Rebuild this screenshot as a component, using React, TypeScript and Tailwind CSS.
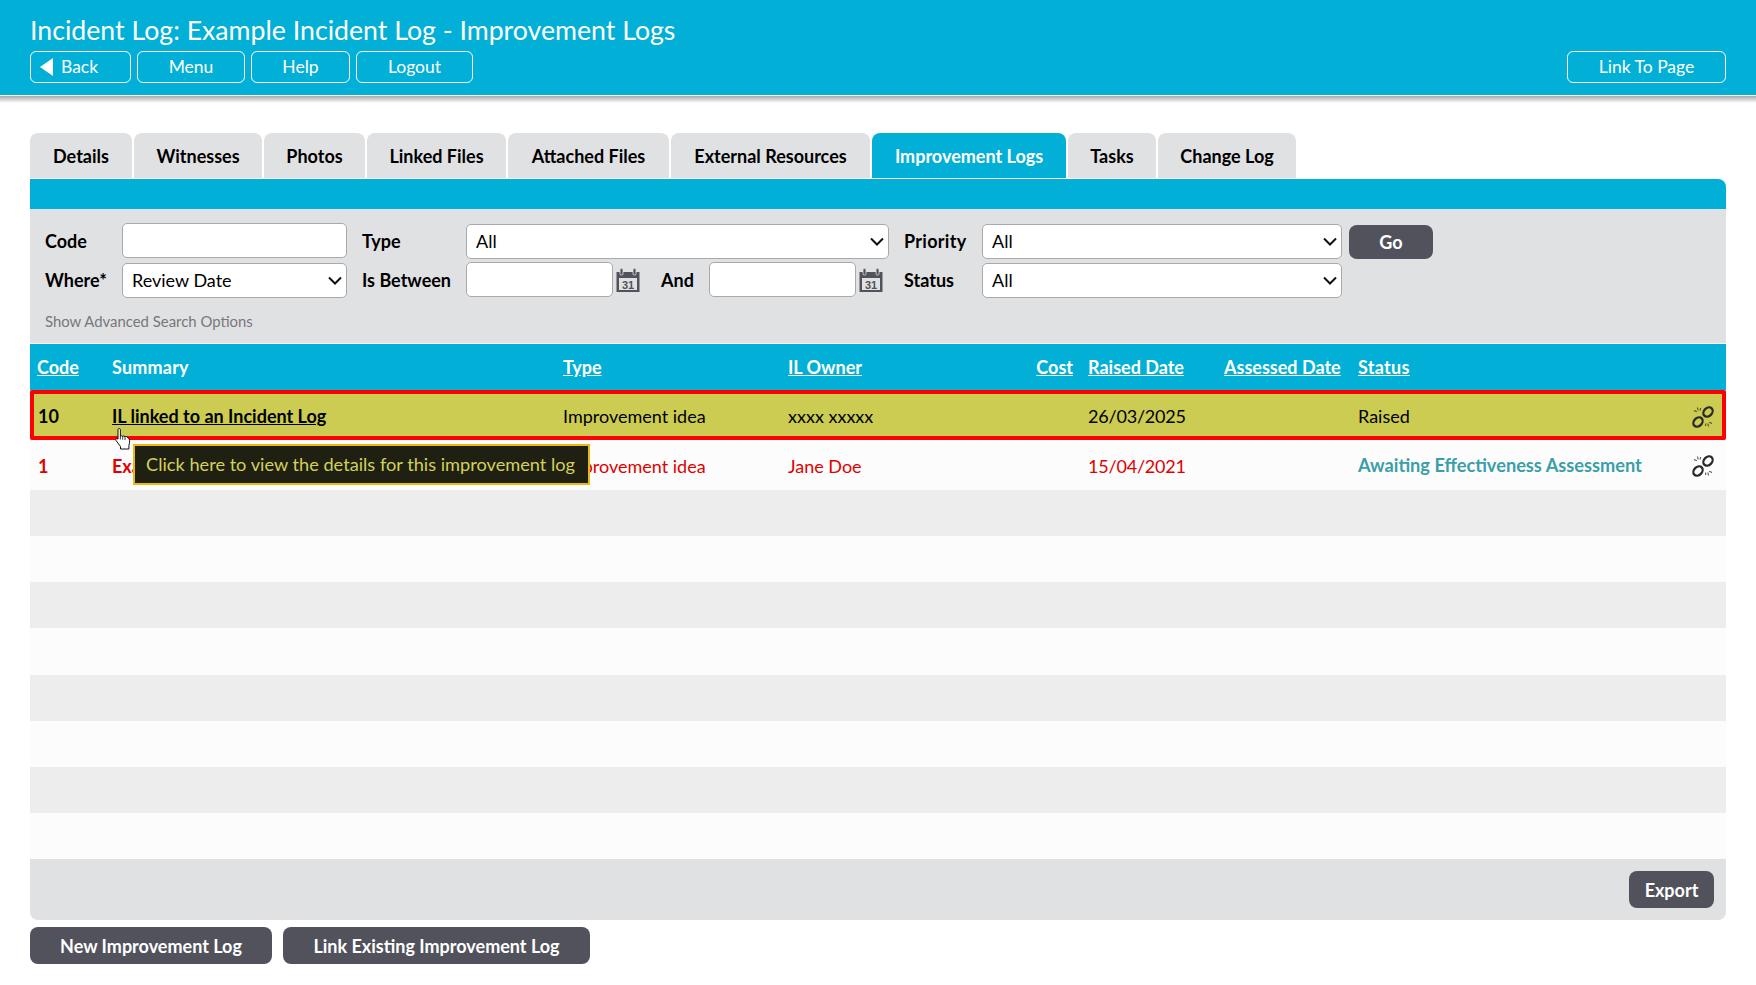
import React from 'react';

const font = { fontFamily: 'Lato, "Open Sans", sans-serif' };

const tabs = [
  { label: 'Details', w: 'w-[102px]' },
  { label: 'Witnesses', w: 'w-[128px]' },
  { label: 'Photos', w: 'w-[101px]' },
  { label: 'Linked Files', w: 'w-[139px]' },
  { label: 'Attached Files', w: 'w-[161px]' },
  { label: 'External Resources', w: 'w-[199px]' },
  { label: 'Improvement Logs', w: 'w-[194px]', active: true },
  { label: 'Tasks', w: 'w-[88px]' },
  { label: 'Change Log', w: 'w-[138px]' },
];

const rowGrid =
  'grid grid-cols-[75px_451px_225px_239px_61px_136px_134px_329px_46px] items-center';

function CalendarIcon() {
  return (
    <svg width="24" height="24" viewBox="0 0 24 24" className="ml-[3px] shrink-0">
      <path d="M0.500 4h23v20h-23z M3 10v12h18V10z" fill="#52525c" fillRule="evenodd" />
      <rect x="4" y="0.500" width="3" height="6.500" rx="1.200" fill="#52525c" stroke="#e0e1e3" strokeWidth="0.800" />
      <rect x="17" y="0.500" width="3" height="6.500" rx="1.200" fill="#52525c" stroke="#e0e1e3" strokeWidth="0.800" />
      <text x="12" y="20.500" textAnchor="middle" fontSize="11" fontWeight="700" fill="#52525c" fontFamily="Liberation Sans, sans-serif">
        31
      </text>
    </svg>
  );
}

function BrokenLinkIcon() {
  return (
    <svg width="24" height="24" viewBox="0 0 24 24" fill="none" stroke="#2a2a2a" className="mx-auto">
      <ellipse cx="17" cy="7" rx="5.200" ry="4" strokeWidth="2.300" transform="rotate(-45 17 7)" />
      <ellipse cx="7" cy="17" rx="5.200" ry="4" strokeWidth="2.300" transform="rotate(-45 7 17)" />
      <path d="M6.500 2.500l.6 3M3 5.500l2.800 1.200M9.500 3l-.3 2.500M17.500 21.500l-.6-3M21 18.500l-2.800-1.200M14.500 21l.3-2.500" strokeWidth="1.100" opacity="0.800" />
    </svg>
  );
}

function HandCursor() {
  return (
    <svg width="18" height="23" viewBox="0 0 18 23" className="absolute left-[114px] top-[428px]">
      <path
        d="M4 1.500c0-1.300 2.400-1.300 2.400 0v7c0-1 2.300-1 2.300.2 0-1 2.300-1 2.300.3 0-.9 2.200-.8 2.300.4l2 1.500c.5 2 .3 4.500-.4 6.500v3.600H6.500v-2.500L2 12.500c-1-1.500.8-2.700 2-1.300V1.500z"
        fill="#fff"
        stroke="#111"
        strokeWidth="1"
        strokeLinejoin="round"
      />
      <path d="M6.400 8.500v3M8.700 8.700v3M11 9v3" stroke="#111" strokeWidth="0.800" fill="none" />
    </svg>
  );
}

function HeaderButton({ children, className }: { children: React.ReactNode; className: string }) {
  return (
    <button className={`flex h-[32px] items-center justify-center rounded-[6px] border border-white text-[17.5px] text-white ${className}`}>
      {children}
    </button>
  );
}

function DarkButton({ children, className }: { children: React.ReactNode; className: string }) {
  return (
    <button className={`flex h-[37px] items-center justify-center rounded-[8px] bg-[#52525c] pt-[2px] text-[18px] font-bold text-white ${className}`}>
      {children}
    </button>
  );
}

function Select({ value }: { value: string }) {
  return (
    <div className="relative self-end">
      <select className="h-[35px] w-full appearance-none rounded-[5px] border border-[#a9a9ab] bg-white pl-[9px] text-[18px] text-black">
        <option>{value}</option>
      </select>
      <svg width="14" height="9" viewBox="0 0 14 9" fill="none" stroke="#111" strokeWidth="2" className="pointer-events-none absolute right-[5px] top-[13px]">
        <path d="M1 1.500l6 6 6-6" />
      </svg>
    </div>
  );
}

const fieldClass = 'h-[35px] w-full self-start rounded-[5px] border border-[#a9a9ab] bg-white';
const labelClass = 'text-[18px] font-bold text-black';

export default function App() {
  return (
    <div className="relative h-[985px] w-[1756px] overflow-hidden bg-white text-black" style={font}>
      <header className="h-[95px] bg-[#02afd6] px-[30px] pt-[12px]">
        <h1 className="h-[39px] text-[26.700px] leading-[36px] text-white">
          Incident Log: Example Incident Log - Improvement Logs
        </h1>
        <div className="flex">
          <div className="flex gap-[6px]">
            <HeaderButton className="w-[101px] !justify-start gap-[8px] pl-[9px]">
              <span className="h-0 w-0 border-y-[9px] border-r-[13px] border-y-transparent border-r-white" />
              Back
            </HeaderButton>
            <HeaderButton className="w-[108px]">Menu</HeaderButton>
            <HeaderButton className="w-[99px]">Help</HeaderButton>
            <HeaderButton className="w-[117px]">Logout</HeaderButton>
          </div>
          <HeaderButton className="ml-auto w-[159px]">Link To Page</HeaderButton>
        </div>
      </header>
      <div className="mt-px h-[7px] bg-gradient-to-b from-[#a8a8a8] to-white" />

      <main className="px-[30px] pt-[30px]">
        <nav className="flex gap-[2px]">
          {tabs.map((t) => (
            <div
              key={t.label}
              className={`flex h-[45px] items-center justify-center rounded-t-[8px] pt-[2px] text-[18px] font-bold ${t.w} ${
                t.active ? 'bg-[#02afd6] text-white' : 'bg-[#e0e1e3] text-black'
              }`}
            >
              {t.label}
            </div>
          ))}
        </nav>
        <div className="mt-px h-[30px] rounded-tr-[8px] bg-[#02afd6]" />

        <section className="h-[134px] bg-[#e0e1e3] pl-[15px] pt-[14px]">
          <div className="grid grid-cols-[77px_225px_15px_104px_147px_48px_48px_147px_33px_15px_78px_360px_7px_84px] grid-rows-[36px_36px] items-center gap-y-[3px]">
            <span className={labelClass}>Code</span>
            <input className={fieldClass} />
            <span className={`${labelClass} col-start-4`}>Type</span>
            <div className="col-span-5 col-start-5 self-end">
              <Select value="All" />
            </div>
            <span className={`${labelClass} col-start-11 tracking-[0.300px]`}>Priority</span>
            <Select value="All" />
            <button className="col-start-14 h-[34px] self-end rounded-[8px] bg-[#52525c] text-[18px] font-bold text-white">Go</button>

            <span className={labelClass}>Where*</span>
            <Select value="Review Date" />
            <span className={`${labelClass} col-start-4`}>Is Between</span>
            <input className={fieldClass} />
            <CalendarIcon />
            <span className={labelClass}>And</span>
            <input className={fieldClass} />
            <CalendarIcon />
            <span className={`${labelClass} col-start-11`}>Status</span>
            <Select value="All" />
          </div>
          <div className="mt-[12px] text-[14.900px] text-[#77777c]">Show Advanced Search Options</div>
        </section>

        <div className={`${rowGrid} mt-px h-[46px] bg-[#02afd6] text-[18px] font-bold text-white`}>
          <a className="pl-[7px] underline">Code</a>
          <span className="pl-[7px] tracking-[0.200px]">Summary</span>
          <a className="pl-[7px] underline">Type</a>
          <a className="pl-[7px] underline">IL Owner</a>
          <a className="pr-[8px] text-right underline">Cost</a>
          <a className="pl-[7px] underline">Raised Date</a>
          <a className="pl-[7px] underline">Assessed Date</a>
          <a className="pl-[7px] tracking-[0.300px] underline">Status</a>
          <span />
        </div>

        <div className={`${rowGrid} h-[50px] rounded-[2px] bg-[#cccc52] pt-[3px] text-[18px] text-black ring-4 ring-inset ring-[#ff0000]`}>
          <span className="pl-[8px] font-bold">10</span>
          <a className="pl-[7px] font-bold underline">IL linked to an Incident Log</a>
          <span className="pl-[7px]">Improvement idea</span>
          <span className="pl-[7px]">xxxx xxxxx</span>
          <span />
          <span className="pl-[7px] tracking-[-0.200px]">26/03/2025</span>
          <span />
          <span className="pl-[7px]">Raised</span>
          <BrokenLinkIcon />
        </div>
        <div className={`${rowGrid} h-[50px] bg-[#fcfcfc] pt-[2px] text-[18px] text-[#e00000]`}>
          <span className="pl-[8px] font-bold">1</span>
          <span className="pl-[7px] font-bold">Example</span>
          <span className="pl-[7px]">Improvement idea</span>
          <span className="pl-[7px]">Jane Doe</span>
          <span />
          <span className="pl-[7px] tracking-[-0.200px]">15/04/2021</span>
          <span />
          <span className="pl-[7px] text-[18.200px] font-bold text-[#3a9fa8]">Awaiting Effectiveness Assessment</span>
          <BrokenLinkIcon />
        </div>
        {[0, 1, 2, 3, 4, 5, 6, 7].map((i) => (
          <div key={i} className={`h-[46.125px] ${i % 2 === 0 ? 'bg-[#ededed]' : 'bg-[#fcfcfc]'}`} />
        ))}

        <div className="flex h-[61px] items-start justify-end rounded-b-[8px] bg-[#e0e1e3] pr-[12px] pt-[12px]">
          <DarkButton className="w-[85px]">Export</DarkButton>
        </div>
        <div className="mt-[7px] flex gap-[11px]">
          <DarkButton className="w-[242px]">New Improvement Log</DarkButton>
          <DarkButton className="w-[307px]">Link Existing Improvement Log</DarkButton>
        </div>
      </main>

      <div className="absolute left-[133px] top-[444px] flex h-[41px] w-[457px] items-center border-2 border-[#e8b90f] bg-[#1f1f12] pl-[11px] text-[18.200px] text-[#d2d25a]">
        Click here to view the details for this improvement log
      </div>
      <HandCursor />
    </div>
  );
}
